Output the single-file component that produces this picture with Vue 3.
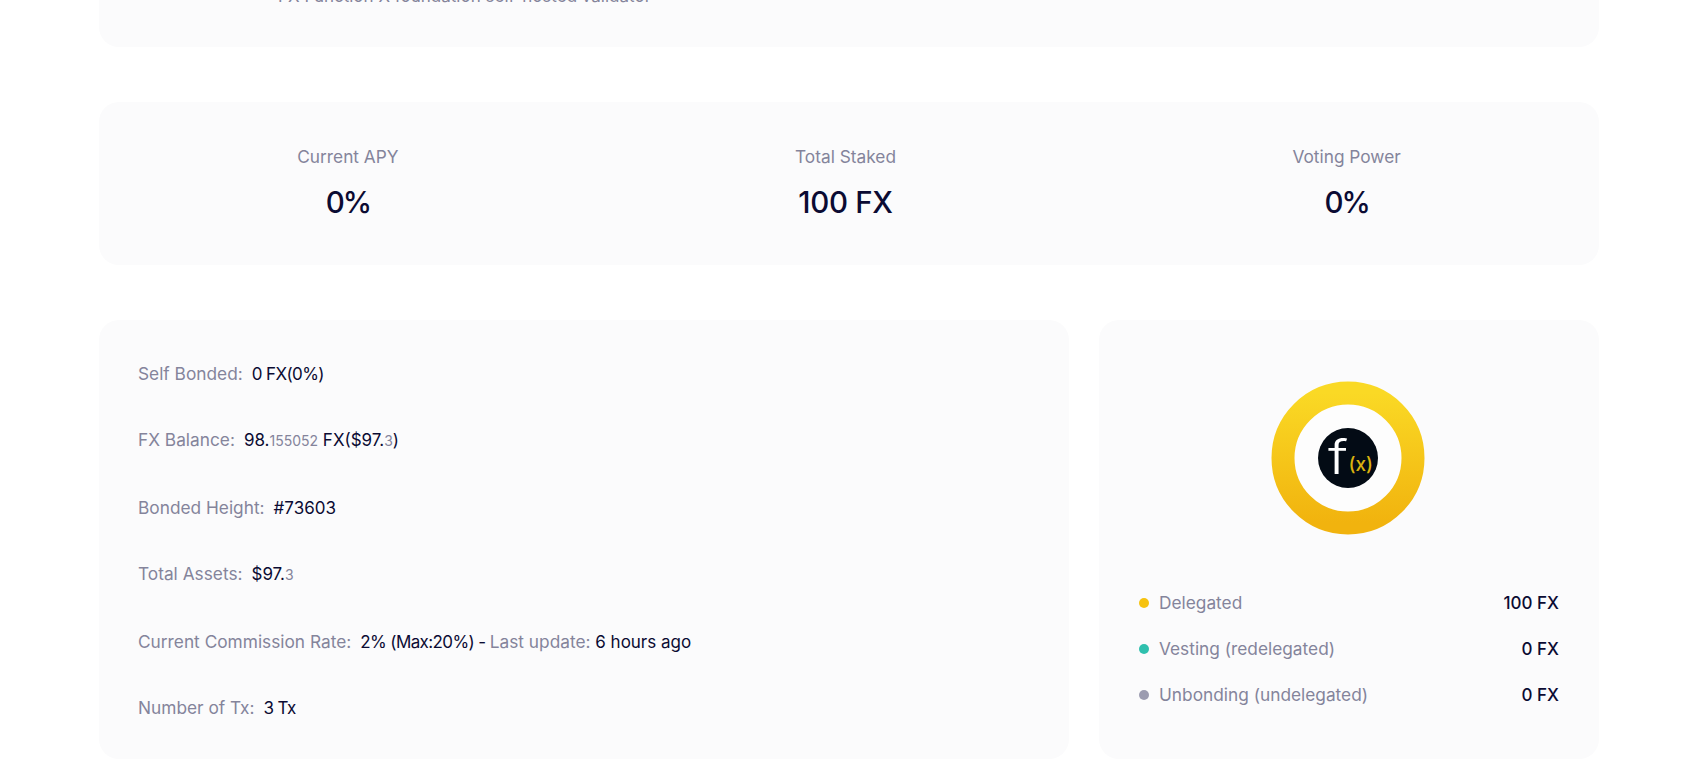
<script setup>
const stats = [
  { label: "Current APY", value: "0%", tight: true },
  { label: "Total Staked", value: "100 FX" },
  { label: "Voting Power", value: "0%", tight: true }
]
const legend = [
  { label: "Delegated", value: "100 FX", color: "#f6c20f" },
  { label: "Vesting (redelegated)", value: "0 FX", color: "#2fc0ae" },
  { label: "Unbonding (undelegated)", value: "0 FX", color: "#9c9cb0" }
]
</script>

<template>
  <div class="page">
    <section class="card intro">
      <p class="desc">FX Function X foundation self-hosted validator</p>
    </section>

    <section class="card stats">
      <div v-for="s in stats" :key="s.label" class="stat">
        <div class="stat-label">{{ s.label }}</div>
        <div class="stat-value" :class="{ tight: s.tight }">{{ s.value }}</div>
      </div>
    </section>

    <div class="bottom">
      <section class="card details">
        <div class="row"><span class="key">Self Bonded:</span><span class="val narrow">0 FX(0%)</span></div>
        <div class="row">
          <span class="key">FX Balance:</span>
          <span class="val">98.<small>155052</small> FX($97.<small>3</small>)</span>
        </div>
        <div class="row"><span class="key">Bonded Height:</span><span class="val">#73603</span></div>
        <div class="row"><span class="key">Total Assets:</span><span class="val">$97.<small>3</small></span></div>
        <div class="row">
          <span class="key">Current Commission Rate:</span>
          <span class="val"><span class="narrow">2% (Max:20%) - </span><em>Last update:</em> 6 hours ago</span>
        </div>
        <div class="row"><span class="key">Number of Tx:</span><span class="val narrow">3 Tx</span></div>
      </section>

      <section class="card share">
        <svg class="donut" width="154" height="154" viewBox="0 0 154 154">
          <defs>
            <linearGradient id="ring" x1="0" y1="0" x2="0" y2="1">
              <stop offset="0" stop-color="#fad925" />
              <stop offset="1" stop-color="#f1b30e" />
            </linearGradient>
          </defs>
          <circle cx="77" cy="77" r="65" fill="#fdfdfd" stroke="url(#ring)" stroke-width="23" />
          <circle cx="77" cy="77" r="30" fill="#030b15" />
          <text x="57" y="93" class="logo-f" textLength="20" lengthAdjust="spacingAndGlyphs">f</text>
          <text x="77.5" y="90" class="logo-x">(x)</text>
        </svg>
        <ul class="legend">
          <li v-for="l in legend" :key="l.label">
            <i class="dot" :style="{ background: l.color }"></i>
            <span class="key">{{ l.label }}</span>
            <span class="amount">{{ l.value }}</span>
          </li>
        </ul>
      </section>
    </div>
  </div>
</template>

<style>
html, body {
  margin: 0;
  background: #fff;
  overflow: hidden;
}
</style>

<style scoped>
.page {
  height: 770px;
  overflow: hidden;
  box-sizing: border-box;
  padding: 0 93px 0 99px;
  font-family: Inter, "Open Sans", sans-serif;
  font-size: 17.3px;
  color: #0b0b33;
}
.card {
  background: #fbfbfc;
  border-radius: 20px;
}
.intro {
  height: 107px;
  margin-top: -60px;
  box-sizing: border-box;
  padding: 46px 0 0 179px;
}
.desc {
  margin: 0;
  font-size: 17px;
  line-height: 20px;
  color: #84849b;
}
.stats {
  margin-top: 55px;
  height: 163px;
  display: flex;
  justify-content: space-around;
  align-items: center;
  text-align: center;
}
.stat-label {
  color: #84849b;
  line-height: 22px;
  margin-top: -3px;
}
.stat-value {
  margin-top: 17px;
  font-size: 29.5px;
  font-weight: 500;
  line-height: 34px;
  letter-spacing: -0.3px;
}
.stat-value.tight {
  letter-spacing: -2px;
}
.bottom {
  display: flex;
  gap: 30px;
  margin-top: 55px;
}
.details {
  width: 970px;
  height: 439px;
  box-sizing: border-box;
  padding: 21px 39px 0;
}
.row {
  line-height: 66.4px;
}
.key {
  color: #84849b;
}
.val {
  margin-left: 9px;
  font-size: 17px;
}
.narrow {
  letter-spacing: -0.6px;
}
.val small {
  font-size: 14px;
  color: #84849b;
}
.val em {
  font-style: normal;
  font-size: 17.3px;
  color: #84849b;
}
.share {
  width: 500px;
  height: 439px;
  box-sizing: border-box;
  padding: 60.5px 40px 0;
}
.donut {
  display: block;
  margin-left: 132px;
}
.logo-f {
  font-family: Inter, sans-serif;
  font-size: 48px;
  font-weight: 300;
  fill: #fff;
}
.logo-x {
  font-family: Inter, sans-serif;
  font-size: 19px;
  font-weight: 500;
  fill: #d9b10f;
}
.legend {
  list-style: none;
  margin: 45px 0 0;
  padding: 0;
}
.legend li {
  display: flex;
  align-items: center;
  height: 46px;
}
.dot {
  width: 10px;
  height: 10px;
  border-radius: 50%;
  margin-right: 10px;
}
.amount {
  margin-left: auto;
  font-weight: 500;
  font-size: 17px;
}
</style>
